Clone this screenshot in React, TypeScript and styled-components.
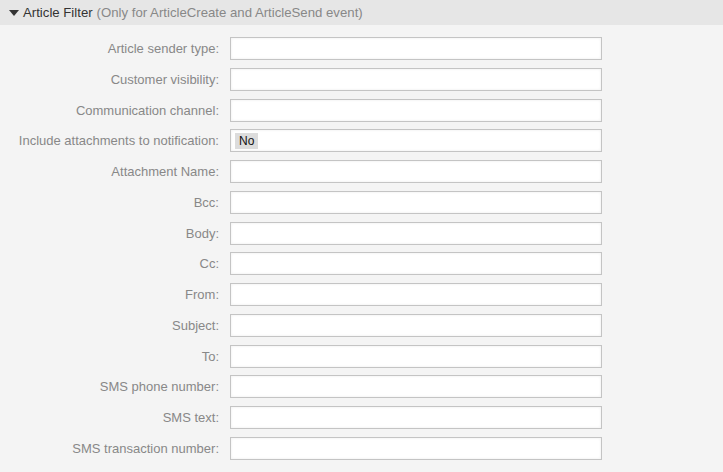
import React from "react";
import styled, { createGlobalStyle } from "styled-components";

const Global = createGlobalStyle`
  html, body { margin: 0; padding: 0; background: #f4f4f4; }
  body { font-family: "Liberation Sans", Arial, sans-serif; font-size: 13px; }
`;

const Widget = styled.section`
  width: 723px;
  height: 472px;
  background: #f4f4f4;
  overflow: hidden;
`;

const Header = styled.div`
  height: 25px;
  background: #e6e6e6;
  display: flex;
  align-items: center;
  padding-left: 9px;
  box-sizing: border-box;
  color: #333;
  font-size: 13.2px;
`;

const Arrow = styled.span`
  width: 0;
  height: 0;
  border-left: 5px solid transparent;
  border-right: 5px solid transparent;
  border-top: 6px solid #333;
  margin-right: 4px;
  margin-top: 1px;
`;

const Sub = styled.span`
  color: #888;
  margin-left: 4px;
`;

const Form = styled.div`
  display: flex;
  flex-direction: column;
  gap: 7.77px;
  padding-top: 12px;
`;

const Row = styled.div`
  display: flex;
  align-items: center;
  height: 23px;
`;

const Label = styled.label`
  width: 220px;
  padding-right: 1px;
  box-sizing: border-box;
  text-align: right;
  color: #888;
  font-size: 13px;
  white-space: nowrap;
`;

const Field = styled.div`
  margin-left: 10px;
  width: 372px;
  height: 23px;
  box-sizing: border-box;
  border: 1px solid #c4c4c4;
  background: #fff;
  box-shadow: inset 0 0 3px rgba(0, 0, 0, 0.08);
  display: flex;
  align-items: center;
  padding-left: 4px;
`;

const Tag = styled.span`
  background: #dcdcdc;
  color: #111;
  font-size: 12px;
  padding: 1px 4px;
  line-height: 14px;
`;

const fields: { label: string; value?: string }[] = [
  { label: "Article sender type:" },
  { label: "Customer visibility:" },
  { label: "Communication channel:" },
  { label: "Include attachments to notification:", value: "No" },
  { label: "Attachment Name:" },
  { label: "Bcc:" },
  { label: "Body:" },
  { label: "Cc:" },
  { label: "From:" },
  { label: "Subject:" },
  { label: "To:" },
  { label: "SMS phone number:" },
  { label: "SMS text:" },
  { label: "SMS transaction number:" },
];

export default function App() {
  return (
    <>
      <Global />
      <Widget>
        <Header>
          <Arrow />
          Article Filter
          <Sub>(Only for ArticleCreate and ArticleSend event)</Sub>
        </Header>
        <Form>
          {fields.map((f) => (
            <Row key={f.label}>
              <Label>{f.label}</Label>
              <Field>{f.value && <Tag>{f.value}</Tag>}</Field>
            </Row>
          ))}
        </Form>
      </Widget>
    </>
  );
}
